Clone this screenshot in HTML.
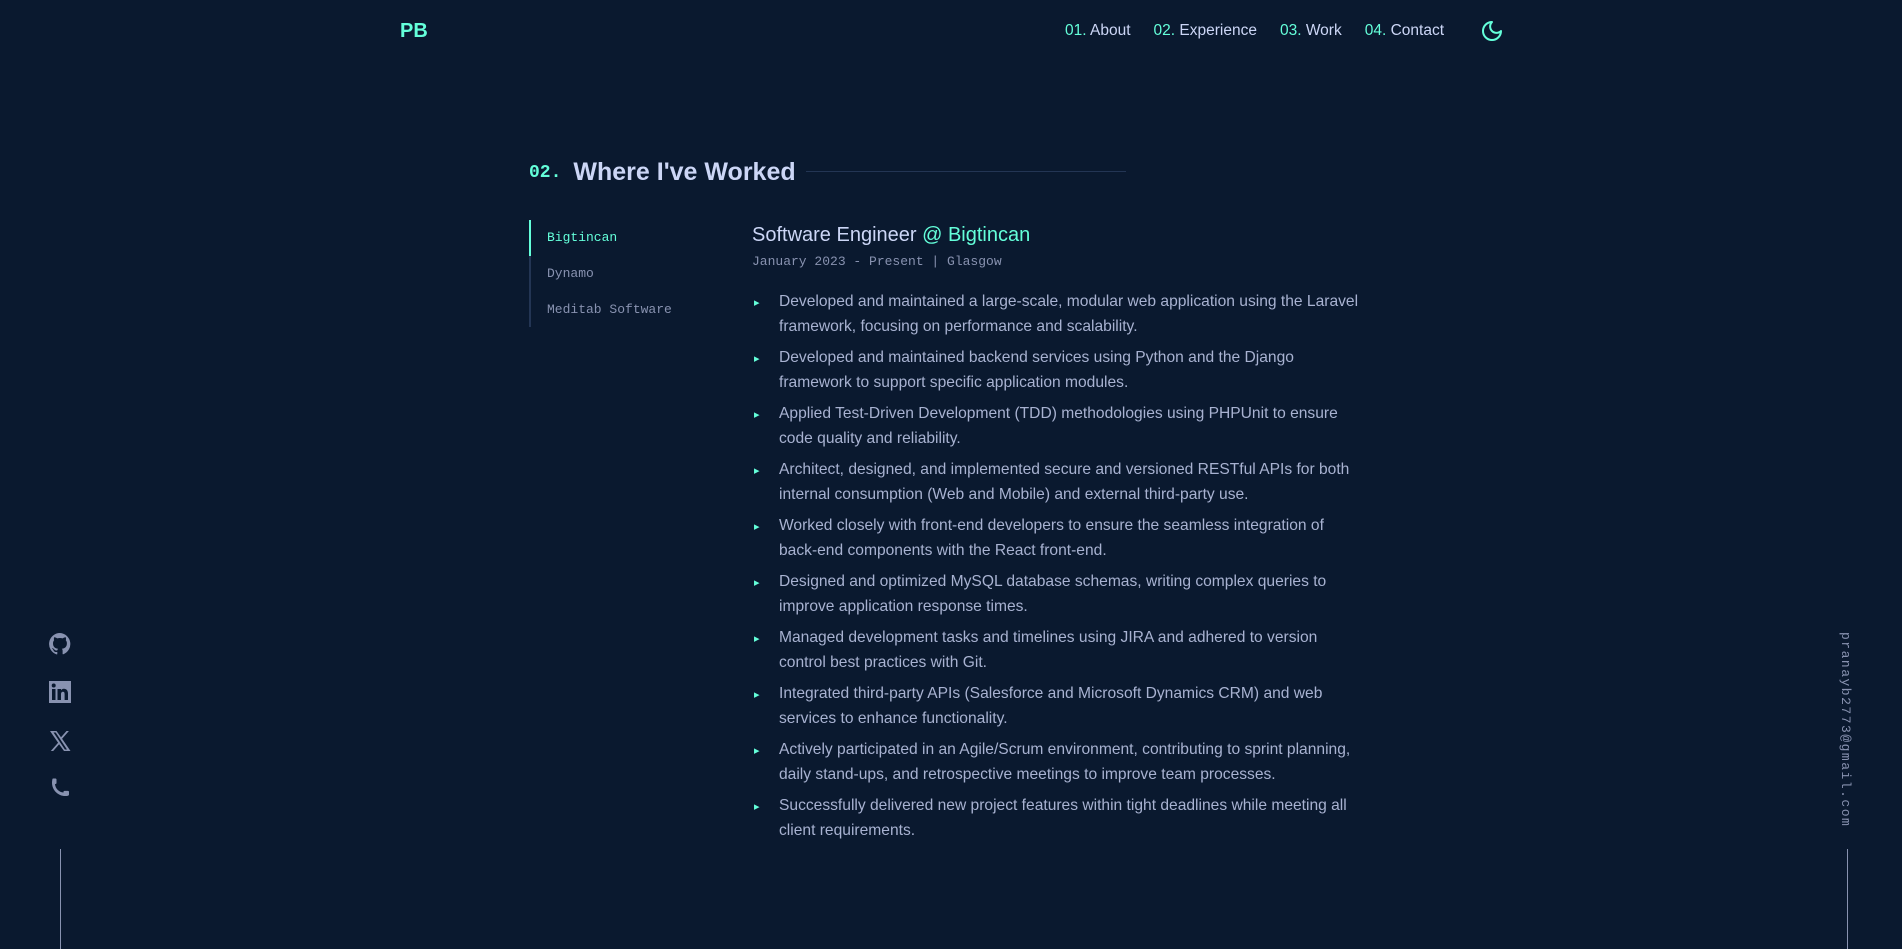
<!DOCTYPE html>
<html><head><style>
*{margin:0;padding:0;box-sizing:border-box}
body{width:1902px;height:942px;background:#0a192f;font-family:"Liberation Sans",sans-serif;position:relative;overflow:hidden;color:#8892b0}
.mono{font-family:"Liberation Mono",monospace}
.abs{position:absolute}
.logo{left:400px;top:20px;color:#64ffda;font-weight:bold;font-size:20px}
.nav{top:22px;left:1065px;font-size:15.5px;color:#ccd6f6;display:flex;gap:23px;white-space:nowrap}
.nav span span{color:#64ffda}
h2{left:529px;top:158px;font-size:25px;color:#ccd6f6;font-weight:bold;white-space:nowrap}
h2 .n{color:#64ffda;font-size:18px;font-family:"Liberation Mono",monospace;margin-right:12px;vertical-align:3px}
.hl{left:806px;top:171px;width:320px;height:1px;background:#233554}
.tabs{left:529px;top:220px;border-left:2px solid #233554;height:107px}
.tab{font-size:13px;height:36px;line-height:36px;padding-left:16px;color:#8892b0;font-family:"Liberation Mono",monospace}
.tab.a{color:#64ffda;border-left:2px solid #64ffda;margin-left:-2px}
.job{left:752px;top:224px;width:612px}
.job h3{font-size:20px;color:#ccd6f6;font-weight:normal}
.job h3 span{color:#64ffda}
.date{font-size:13px;margin-top:7px;color:#8892b0}
ul{list-style:none;margin-top:21px}
li{position:relative;padding-left:27px;font-size:15.6px;line-height:24.5px;color:#a8b2d1;margin-bottom:7px}
li:before{content:"▸";position:absolute;left:2px;top:1px;color:#64ffda;font-size:11px}
.ic{left:48px;width:24px;height:24px;fill:#8892b0}
.vl{width:1px;background:#8892b0;top:849px;height:100px}
.email{left:1838px;top:632px;writing-mode:vertical-rl;font-size:13px;letter-spacing:1.5px;color:#8892b0}
</style></head><body>
<div class="abs logo">PB</div>
<div class="abs nav"><span><span>01.</span> About</span><span><span>02.</span> Experience</span><span><span>03.</span> Work</span><span><span>04.</span> Contact</span></div>
<svg class="abs" style="left:1480px;top:19px" width="24" height="24" viewBox="0 0 24 24" fill="none" stroke="#64ffda" stroke-width="2" stroke-linecap="round" stroke-linejoin="round"><path d="M12 3a6 6 0 0 0 9 9 9 9 0 1 1-9-9z"/></svg>
<h2 class="abs"><span class="n">02.</span>Where I've Worked</h2>
<div class="abs hl"></div>
<div class="abs tabs"><div class="tab a">Bigtincan</div><div class="tab">Dynamo</div><div class="tab">Meditab Software</div></div>
<div class="abs job">
<h3>Software Engineer <span>@ Bigtincan</span></h3>
<div class="date mono">January 2023 - Present | Glasgow</div>
<ul>
<li>Developed and maintained a large-scale, modular web application using the Laravel framework, focusing on performance and scalability.</li>
<li>Developed and maintained backend services using Python and the Django framework to support specific application modules.</li>
<li>Applied Test-Driven Development (TDD) methodologies using PHPUnit to ensure code quality and reliability.</li>
<li>Architect, designed, and implemented secure and versioned RESTful APIs for both internal consumption (Web and Mobile) and external third-party use.</li>
<li>Worked closely with front-end developers to ensure the seamless integration of back-end components with the React front-end.</li>
<li>Designed and optimized MySQL database schemas, writing complex queries to improve application response times.</li>
<li>Managed development tasks and timelines using JIRA and adhered to version control best practices with Git.</li>
<li>Integrated third-party APIs (Salesforce and Microsoft Dynamics CRM) and web services to enhance functionality.</li>
<li>Actively participated in an Agile/Scrum environment, contributing to sprint planning, daily stand-ups, and retrospective meetings to improve team processes.</li>
<li>Successfully delivered new project features within tight deadlines while meeting all client requirements.</li>
</ul></div>
<svg class="abs ic" style="top:632px" viewBox="0 0 24 24"><path d="M12 1a11 11 0 0 0-3.5 21.4c.6.1.8-.2.8-.5v-2c-3.1.7-3.7-1.4-3.7-1.4-.5-1.3-1.2-1.6-1.2-1.6-1-.7.1-.7.1-.7 1.1.1 1.7 1.1 1.7 1.1 1 1.7 2.6 1.2 3.2.9.1-.7.4-1.2.7-1.5-2.5-.3-5.1-1.2-5.1-5.5 0-1.2.4-2.2 1.1-3-.1-.3-.5-1.4.1-2.9 0 0 .9-.3 3 1.1a10.5 10.5 0 0 1 5.5 0c2.1-1.4 3-1.1 3-1.1.6 1.5.2 2.6.1 2.9.7.8 1.1 1.8 1.1 3 0 4.3-2.6 5.2-5.1 5.5.4.3.8 1 .8 2v3c0 .3.2.6.8.5A11 11 0 0 0 12 1z"/></svg>
<svg class="abs ic" style="top:680px" viewBox="0 0 24 24"><path d="M1 1h22v22H1z M4 9v11h3.5V9z M5.7 3.5a2 2 0 1 0 0 4 2 2 0 0 0 0-4z M9.5 9v11H13v-5.5c0-1.5.5-2.7 2-2.7s1.6 1.4 1.6 2.8V20H20v-6.3c0-3.1-1.6-4.9-4-4.9-1.7 0-2.6.9-3 1.6V9z" fill-rule="evenodd"/></svg>
<svg class="abs ic" style="top:729px" viewBox="0 0 24 24"><path d="M2 2h6.5l4.5 6.2L18.5 2h2.4l-6.8 7.8L22.5 22H16l-4.9-6.7L5.2 22H2.8l7.3-8.3z M5.5 3.5l11.4 17h2.1L7.7 3.5z" fill-rule="evenodd"/></svg>
<svg class="abs ic" style="top:776px" viewBox="0 0 24 24"><path d="M5 2.5h2.5c.6 0 1 .5 1 1v3.5c0 .6-.5 1-1 1H7c.3 4.5 4 8.3 8.5 8.5v-.6c0-.6.4-1 1-1H20c.6 0 1 .4 1 1v2.6c0 .6-.4 1-1 1.2-.8.2-1.8.3-2.7.3C10 20 4 14 4 6.7c0-1 .1-2 .3-3 .1-.7.3-1.2.7-1.2z"/></svg>
<div class="abs vl" style="left:60px"></div>
<div class="abs email mono">pranayb2773@gmail.com</div>
<div class="abs vl" style="left:1847px"></div>
</body></html>
